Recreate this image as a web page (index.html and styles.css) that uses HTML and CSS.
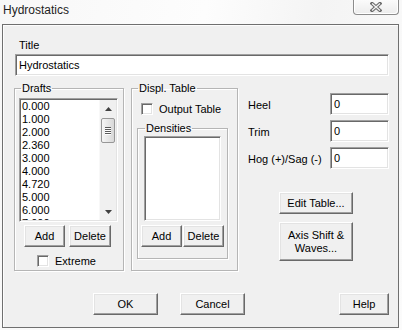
FILE: index.html
```html
<!DOCTYPE html>
<html lang="en">
<head>
  <meta charset="UTF-8" />
  <title>Hydrostatics</title>
  <link rel="stylesheet" href="styles.css">
</head>
<body>

<div class="titlebar">
  <span class="caption">Hydrostatics</span>
  <div class="close-btn">
    <svg width="12" height="10" viewBox="0 0 12 10">
      <path d="M2 1.5 L10 8.5 M10 1.5 L2 8.5" stroke="#6a6a6a" stroke-width="3.4" stroke-linecap="square" fill="none"/>
      <path d="M2 1.5 L10 8.5 M10 1.5 L2 8.5" stroke="#f2f2f2" stroke-width="1.3" fill="none"/>
    </svg>
  </div>
</div>

<div class="dialog">
  <div class="field-label">Title</div>
  <input class="edit title-edit" type="text" value="Hydrostatics" />

  <div class="main">
    <fieldset class="group drafts">
      <legend>Drafts</legend>
      <div class="listbox drafts-list">
        <ul class="items">
          <li>0.000</li>
          <li>1.000</li>
          <li>2.000</li>
          <li>2.360</li>
          <li>3.000</li>
          <li>4.000</li>
          <li>4.720</li>
          <li>5.000</li>
          <li>6.000</li>
          <li>7.000</li>
        </ul>
        <div class="scrollbar">
          <div class="arrow">
            <svg width="7" height="4" viewBox="0 0 7 4"><path d="M3.5 0 L7 4 L0 4 Z" fill="#404040"/></svg>
          </div>
          <div class="track">
            <div class="thumb"><span></span><span></span><span></span><span></span></div>
          </div>
          <div class="arrow">
            <svg width="7" height="4" viewBox="0 0 7 4"><path d="M0 0 L7 0 L3.5 4 Z" fill="#404040"/></svg>
          </div>
        </div>
      </div>
      <div class="btn-row drafts-btns">
        <button class="btn small">Add</button>
        <button class="btn small">Delete</button>
      </div>
      <label class="check extreme"><span class="box"></span>Extreme</label>
    </fieldset>

    <fieldset class="group displ">
      <legend>Displ. Table</legend>
      <label class="check output"><span class="box"></span>Output Table</label>
      <fieldset class="group densities">
        <legend>Densities</legend>
        <div class="listbox dens-list"></div>
        <div class="btn-row dens-btns">
          <button class="btn small">Add</button>
          <button class="btn small">Delete</button>
        </div>
      </fieldset>
    </fieldset>

    <div class="side">
      <div class="param"><span>Heel</span><input class="edit num" type="text" value="0" /></div>
      <div class="param"><span>Trim</span><input class="edit num" type="text" value="0" /></div>
      <div class="param"><span>Hog (+)/Sag (-)</span><input class="edit num" type="text" value="0" /></div>
      <button class="btn wide edit-table">Edit Table...</button>
      <button class="btn wide axis">Axis Shift &amp;<br>Waves...</button>
    </div>
  </div>

  <div class="footer">
    <button class="btn action">OK</button>
    <button class="btn action cancel">Cancel</button>
    <button class="btn help">Help</button>
  </div>
</div>

</body>
</html>
```

FILE: styles.css
```css
* { box-sizing: border-box; }

body {
  margin: 0;
  width: 402px;
  height: 330px;
  overflow: hidden;
  background: linear-gradient(100deg, #f7f7f7 0%, #fdfdfd 45%, #f4f4f4 70%, #fbfbfb 100%);
  font-family: "Liberation Sans", Arial, sans-serif;
  font-size: 11px;
  color: #000;
}

/* window caption */
.titlebar {
  height: 24px;
  display: flex;
  justify-content: space-between;
  align-items: flex-start;
}

.caption {
  font-size: 12px;
  line-height: 15px;
  margin: 3px 0 0 3px;
  color: #1e1e1e;
}

.close-btn {
  width: 46px;
  height: 15px;
  margin-right: 3px;
  border: 1px solid #8c8c8c;
  border-top: none;
  border-radius: 0 0 4px 4px;
  background: linear-gradient(#fbfbfb, #ececec);
  display: flex;
  justify-content: center;
  align-items: center;
  box-shadow: inset 1px 0 #fff, inset -1px -1px #fff;
}

/* dialog client area */
.dialog {
  margin-left: 2px;
  width: 397px;
  height: 304px;
  border: 1px solid #6f6f6f;
  box-shadow: inset 1px 1px #fdfdfd;
  background: #f0f0f0;
  padding: 14px 9px 0 11px;
}

.field-label {
  line-height: 13px;
  margin: 0 0 2px 5px;
}

/* sunken 3d edit */
.edit {
  display: block;
  height: 22px;
  border: 1px solid;
  border-color: #a0a0a0 #fff #fff #a0a0a0;
  box-shadow: inset 1px 1px #696969, inset -1px -1px #e3e3e3;
  background: #fff;
  font: inherit;
  padding: 0 0 0 3px;
  outline: none;
}

.title-edit {
  width: 374px;
  margin-left: 1px;
}

.main {
  display: flex;
  margin-top: 6px;
  height: 189px;
}

/* group boxes */
.group {
  margin: 0;
  min-width: 0;
  border: 1px solid #b5b5b5;
  box-shadow: inset 1px 1px #fff, 1px 1px #fff;
}

.group legend {
  padding: 0 1px;
  line-height: 13px;
}

.drafts {
  width: 110px;
  height: 189px;
  padding: 3px 0 0 4px;
}
.drafts legend { margin-left: 2px; }

.displ {
  width: 107px;
  height: 189px;
  margin-left: 7px;
  padding: 7px 0 0 5px;
}
.displ legend { margin-left: 1px; }

.densities {
  width: 91px;
  height: 137px;
  margin-top: 7px;
  padding: 1px 0 0 6px;
}

/* listboxes */
.listbox {
  border: 1px solid;
  border-color: #a0a0a0 #fff #fff #a0a0a0;
  box-shadow: inset 1px 1px #696969, inset -1px -1px #e3e3e3;
  background: #fff;
  padding: 1px;
}

.drafts-list {
  width: 99px;
  height: 124px;
  display: flex;
}

.dens-list {
  width: 77px;
  height: 85px;
}

.items {
  list-style: none;
  margin: 0;
  padding: 0 0 0 1px;
  flex: 1;
  overflow: hidden;
  line-height: 13px;
}

.scrollbar {
  width: 17px;
  display: flex;
  flex-direction: column;
  background: #f0f0f0;
  border-left: 1px solid #f8f8f8;
}

.arrow {
  height: 17px;
  display: flex;
  justify-content: center;
  align-items: center;
}

.track {
  flex: 1;
  padding-top: 1px;
}

.thumb {
  width: 14px;
  height: 25px;
  margin-left: 1px;
  border: 1px solid #979797;
  border-radius: 2px;
  background: linear-gradient(to right, #f6f6f6, #e4e4e4 60%, #d8d8d8);
  display: flex;
  flex-direction: column;
  align-items: center;
  justify-content: center;
  gap: 1px;
}

.thumb span {
  width: 6px;
  height: 1px;
  background: #5a5a5a;
  box-shadow: 0 1px #fff;
}

/* raised 3d buttons */
.btn {
  height: 22px;
  padding: 0;
  border: 1px solid;
  border-color: #fff #696969 #696969 #fff;
  box-shadow: inset -1px -1px #a0a0a0, inset 1px 1px #e3e3e3;
  background: #f0f0f0;
  font: inherit;
  color: #000;
  line-height: 13px;
}

.btn-row {
  display: flex;
  margin-top: 3px;
}

.drafts-btns { margin-left: 5px; gap: 4px; }
.drafts-btns .btn:first-child { width: 41px; }
.drafts-btns .btn:last-child { width: 42px; }

.dens-btns { margin-left: -3px; margin-top: 4px; gap: 1px; }
.dens-btns .btn { width: 41px; }

/* check boxes */
.check {
  display: flex;
  align-items: center;
  height: 13px;
}

.check .box {
  width: 12px;
  height: 12px;
  border: 1px solid;
  border-color: #a0a0a0 #fff #fff #a0a0a0;
  box-shadow: inset 1px 1px #696969, inset -1px -1px #e3e3e3;
  background: #fff;
  margin-right: 6px;
}

.extreme {
  margin: 7px 0 0 18px;
}

.output {
  margin-left: 4px;
}

/* right column */
.side {
  width: 141px;
  margin-left: 10px;
  padding-top: 11px;
  display: flex;
  flex-direction: column;
  align-items: flex-start;
}

.param {
  width: 141px;
  height: 22px;
  display: flex;
  align-items: center;
  justify-content: space-between;
  margin-bottom: 5px;
}

.param span {
  white-space: nowrap;
  padding-top: 1px;
}

.num {
  width: 59px;
  flex-shrink: 0;
}

.wide {
  width: 74px;
  margin-left: 31px;
}

.edit-table { margin-top: 18px; }

.axis {
  height: 39px;
  margin-top: 8px;
}

/* footer */
.footer {
  display: flex;
  margin-top: 22px;
  padding-left: 79px;
}

.action { width: 65px; }
.cancel { margin-left: 22px; }
.help {
  width: 50px;
  margin-left: auto;
}
```
